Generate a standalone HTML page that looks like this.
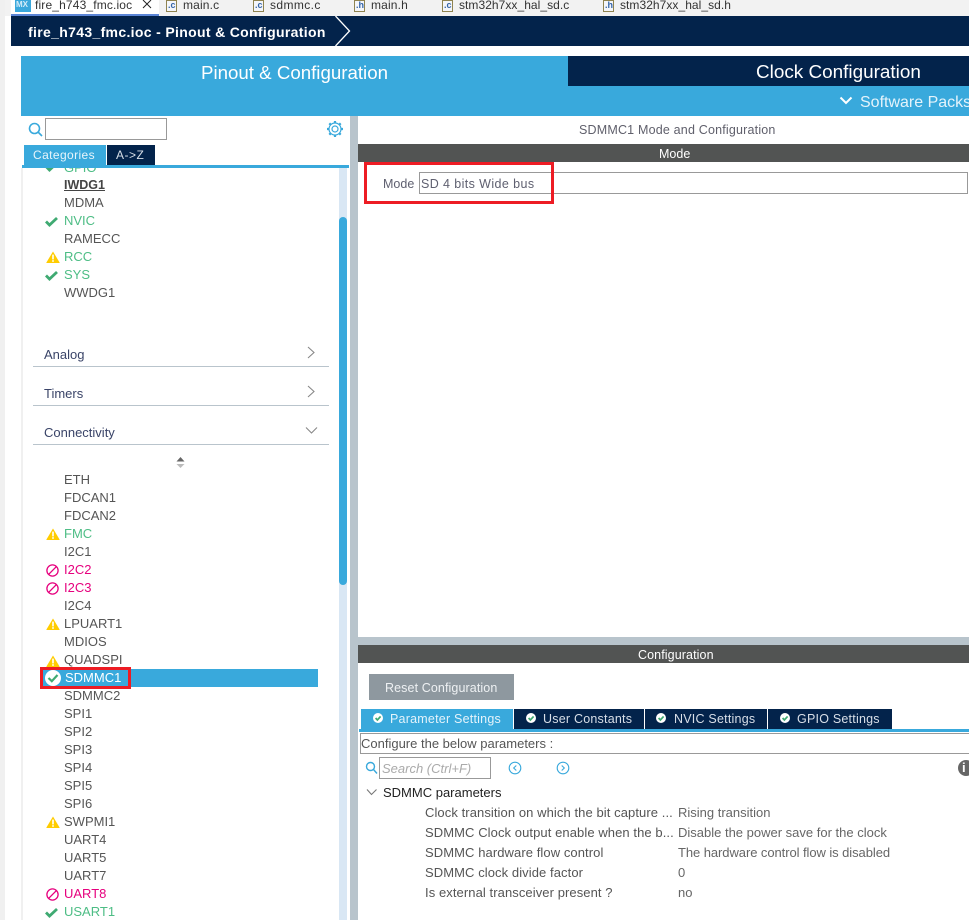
<!DOCTYPE html>
<html><head><meta charset="utf-8">
<style>
html,body{margin:0;padding:0;background:#fff}
#p{position:relative;width:969px;height:920px;overflow:hidden;background:#fff;font-family:"Liberation Sans",sans-serif;font-size:12px;color:#4c4c4c}
#p div,#p span.t,#p svg{position:absolute}
.t{position:absolute;white-space:nowrap;line-height:16px}
.l{left:64px;font-size:13px;color:#555}
.g{color:#4dbd85}.m{color:#e6007e}
.tab{color:#333;font-size:12px;top:-3px;letter-spacing:.15px}
.sec{left:44px;font-size:13px;color:#3a4468}
.ln{left:33px;width:296px;height:1px;background:#b9c4cc}
.ph{color:#555;font-size:13px;letter-spacing:.08px}
.v{color:#666;font-size:13px;letter-spacing:0}
.wt{color:#fff}
.st{font-size:12.5px;letter-spacing:.22px}
</style></head><body><div id="p">
<svg width="0" height="0" style="position:absolute"><defs>
<g id="chk"><path d="M1 5.5 L4.5 9 L12 2" fill="none" stroke="#3faa72" stroke-width="2.8"/></g>
<g id="warn"><path d="M7 .5 L13.6 11.5 Q14 12 13 12 L1 12 Q0 12 .4 11.5 Z" fill="#ffcc00"/><rect x="6.2" y="3.6" width="1.6" height="4.8" fill="#fff"/><rect x="6.2" y="9.2" width="1.6" height="1.6" fill="#fff"/></g>
<g id="no"><circle cx="6.5" cy="6.5" r="5.6" fill="none" stroke="#e6007e" stroke-width="1.3"/><path d="M2.6 10.4 L10.4 2.6" stroke="#e6007e" stroke-width="1.3"/></g>
<g id="cc"><circle cx="5" cy="5" r="5" fill="#fff"/><path d="M2.6 5 L4.4 7 L7.6 3.4" fill="none" stroke="#3faa72" stroke-width="1.7"/></g>
</defs></svg>

<div style="left:0;top:0;width:969px;height:16px;background:#f2f2f2"></div>
<div style="left:0;top:0;width:5px;height:920px;background:#f0f0f0"></div>
<div style="left:5px;top:16px;width:6px;height:904px;background:#fff"></div>
<div style="left:11px;top:0;width:148px;height:16px;background:#fff"></div>
<div style="left:11px;top:14px;width:148px;height:2px;background:#5b85d6"></div>
<div style="left:15px;top:0;width:16px;height:12px;background:#3aa8dc"></div>
<span class="t" style="left:16px;top:-3px;font-size:8px;font-weight:bold;color:#d5ecf8">MX</span>
<span class="t tab" style="left:35px">fire_h743_fmc.ioc</span>
<svg style="left:142px;top:0" width="11" height="10"><path d="M1 0 L9 8 M9 0 L1 8" stroke="#222" stroke-width="1"/></svg>
<div style="left:166px;top:0;width:9px;height:10px;border:1px solid #8f8350;background:#f4f6fa"></div><span class="t" style="left:168px;top:-3px;font-size:9px;font-weight:bold;color:#3565a8">.c</span>
<span class="t tab" style="left:183px">main.c</span>
<div style="left:253px;top:0;width:9px;height:10px;border:1px solid #8f8350;background:#f4f6fa"></div><span class="t" style="left:255px;top:-3px;font-size:9px;font-weight:bold;color:#3565a8">.c</span>
<span class="t tab" style="left:270px;letter-spacing:.4px">sdmmc.c</span>
<div style="left:354px;top:0;width:9px;height:10px;border:1px solid #8f8350;background:#f4f6fa"></div><span class="t" style="left:356px;top:-3px;font-size:9px;font-weight:bold;color:#3565a8">.h</span>
<span class="t tab" style="left:371px">main.h</span>
<div style="left:442px;top:0;width:9px;height:10px;border:1px solid #8f8350;background:#f4f6fa"></div><span class="t" style="left:444px;top:-3px;font-size:9px;font-weight:bold;color:#3565a8">.c</span>
<span class="t tab" style="left:459px;letter-spacing:.05px">stm32h7xx_hal_sd.c</span>
<div style="left:603px;top:0;width:9px;height:10px;border:1px solid #8f8350;background:#f4f6fa"></div><span class="t" style="left:605px;top:-3px;font-size:9px;font-weight:bold;color:#3565a8">.h</span>
<span class="t tab" style="left:620px;letter-spacing:.05px">stm32h7xx_hal_sd.h</span>

<div style="left:11px;top:16px;width:958px;height:30px;background:#03234b"></div>
<span class="t" style="left:28px;top:24px;font-size:14px;font-weight:bold;color:#fff;letter-spacing:.33px">fire_h743_fmc.ioc - Pinout &amp; Configuration</span>
<svg style="left:333px;top:16px" width="20" height="30"><path d="M2.5 0 L16.5 15 L2.5 30" fill="none" stroke="#fff" stroke-width="1.3"/></svg>

<div style="left:21px;top:56px;width:948px;height:60px;background:#39a9dc"></div>
<div style="left:568px;top:56px;width:401px;height:30px;background:#03234b"></div>
<span class="t" style="left:201px;top:63px;font-size:18.7px;line-height:20px;color:#fff">Pinout &amp; Configuration</span>
<span class="t" style="left:756px;top:63px;font-size:18.9px;line-height:20px;color:#fff">Clock Configuration</span>
<svg style="left:839px;top:96px" width="15" height="10"><path d="M1.5 1.5 L7 7 L12.5 1.5" fill="none" stroke="#fff" stroke-width="2"/></svg>
<span class="t" style="left:860px;top:93px;font-size:16px;line-height:20px;color:#e4f3fb">Software Packs</span>

<svg style="left:28px;top:122px" width="16" height="15"><circle cx="6.5" cy="6.5" r="5" fill="none" stroke="#39a9dc" stroke-width="1.6"/><path d="M10 10 L14 14" stroke="#39a9dc" stroke-width="1.6"/></svg>
<div style="left:45px;top:118px;width:120px;height:20px;border:1px solid #999;background:#fff"></div>
<svg style="left:326px;top:120px" width="18" height="18" viewBox="0 0 18 18"><circle cx="9" cy="9" r="3" fill="none" stroke="#39a9dc" stroke-width="1.2"/><circle cx="9" cy="9" r="6" fill="none" stroke="#39a9dc" stroke-width="1.2"/><path d="M9 1V3M9 15V17M1 9H3M15 9H17M3.3 3.3L4.8 4.8M13.2 13.2L14.7 14.7M14.7 3.3L13.2 4.8M4.8 13.2L3.3 14.7" stroke="#39a9dc" stroke-width="2.2"/></svg>
<div style="left:24px;top:145px;width:82px;height:20px;background:#39a9dc"></div>
<span class="t" style="left:33px;top:147px;font-size:12px;color:#e8f5fb;letter-spacing:.4px">Categories</span>
<div style="left:107px;top:145px;width:48px;height:20px;background:#03234b"></div>
<span class="t" style="left:116px;top:147px;font-size:12px;color:#d8dfe8;letter-spacing:.5px">A-&gt;Z</span>
<div style="left:22px;top:165px;width:327px;height:3px;background:#39a9dc"></div>
<div style="left:21px;top:168px;width:2px;height:752px;background:#f0f0f0"></div>

<div style="left:339px;top:168px;width:8px;height:752px;background:#d9e7f4"></div>
<div style="left:339px;top:217px;width:8px;height:368px;background:#39a9dc;border-radius:4px"></div>
<div style="left:350px;top:116px;width:8px;height:804px;background:#b8c4cc"></div>

<div style="left:23px;top:168px;width:316px;height:8px;overflow:hidden">
<span class="t g" style="left:41px;top:-8px;font-size:13px">GPIO</span>
<svg style="left:22px;top:-7px" width="14" height="12"><use href="#chk"/></svg></div>
<span class="t l" style="top:177px;font-weight:bold;text-decoration:underline;color:#444;font-size:12.5px">IWDG1</span>
<span class="t l" style="top:195px">MDMA</span>
<span class="t l g" style="top:213px;color:#4dbd85">NVIC</span>
<span class="t l" style="top:231px">RAMECC</span>
<span class="t l g" style="top:249px;color:#4dbd85">RCC</span>
<span class="t l g" style="top:267px;color:#4dbd85">SYS</span>
<span class="t l" style="top:285px">WWDG1</span>
<svg style="left:45px;top:216px" width="14" height="12"><use href="#chk"/></svg>
<svg style="left:46px;top:251px" width="14" height="13"><use href="#warn"/></svg>
<svg style="left:45px;top:270px" width="14" height="12"><use href="#chk"/></svg>

<span class="t sec" style="top:347px">Analog</span><div class="ln" style="top:366px"></div>
<span class="t sec" style="top:386px">Timers</span><div class="ln" style="top:405px"></div>
<span class="t sec" style="top:425px">Connectivity</span><div class="ln" style="top:444px"></div>
<svg style="left:306px;top:346px" width="10" height="13"><path d="M2 1 L8 6.5 L2 12" fill="none" stroke="#888" stroke-width="1.1"/></svg>
<svg style="left:306px;top:385px" width="10" height="13"><path d="M2 1 L8 6.5 L2 12" fill="none" stroke="#888" stroke-width="1.1"/></svg>
<svg style="left:305px;top:426px" width="13" height="9"><path d="M1 1.5 L6.5 7 L12 1.5" fill="none" stroke="#888" stroke-width="1.1"/></svg>
<svg style="left:176px;top:457px" width="9" height="12"><path d="M4.5 0 L8.5 4.5 H.5 Z" fill="#666"/><path d="M.5 7 H8.5 L4.5 11 Z" fill="#bbb"/></svg>

<span class="t l" style="top:472px">ETH</span>
<span class="t l" style="top:490px">FDCAN1</span>
<span class="t l" style="top:508px">FDCAN2</span>
<span class="t l g" style="top:526px;color:#4dbd85">FMC</span>
<span class="t l" style="top:544px">I2C1</span>
<span class="t l m" style="top:562px;color:#e6007e">I2C2</span>
<span class="t l m" style="top:580px;color:#e6007e">I2C3</span>
<span class="t l" style="top:598px">I2C4</span>
<span class="t l" style="top:616px">LPUART1</span>
<span class="t l" style="top:634px">MDIOS</span>
<span class="t l" style="top:652px">QUADSPI</span>
<div style="left:43px;top:669px;width:275px;height:18px;background:#39a9dc"></div>
<span class="t l" style="top:670px;left:65px;color:#fff">SDMMC1</span>
<span class="t l" style="top:688px">SDMMC2</span>
<span class="t l" style="top:706px">SPI1</span>
<span class="t l" style="top:724px">SPI2</span>
<span class="t l" style="top:742px">SPI3</span>
<span class="t l" style="top:760px">SPI4</span>
<span class="t l" style="top:778px">SPI5</span>
<span class="t l" style="top:796px">SPI6</span>
<span class="t l" style="top:814px">SWPMI1</span>
<span class="t l" style="top:832px">UART4</span>
<span class="t l" style="top:850px">UART5</span>
<span class="t l" style="top:868px">UART7</span>
<span class="t l m" style="top:886px;color:#e6007e">UART8</span>
<span class="t l g" style="top:904px;color:#4dbd85">USART1</span>
<svg style="left:46px;top:528px" width="14" height="13"><use href="#warn"/></svg>
<svg style="left:46px;top:564px" width="13" height="13"><use href="#no"/></svg>
<svg style="left:46px;top:582px" width="13" height="13"><use href="#no"/></svg>
<svg style="left:46px;top:618px" width="14" height="13"><use href="#warn"/></svg>
<svg style="left:46px;top:655px" width="14" height="13"><use href="#warn"/></svg>
<svg style="left:45px;top:670px" width="16" height="16" viewBox="0 0 16 16"><circle cx="8" cy="8" r="8" fill="#fff"/><path d="M3.5 8 L6.8 11.2 L12.5 5" fill="none" stroke="#3faa72" stroke-width="2.2"/></svg>
<div style="left:40px;top:667px;width:85px;height:16px;border:3px solid #ed1c24"></div>
<svg style="left:46px;top:816px" width="14" height="13"><use href="#warn"/></svg>
<svg style="left:46px;top:888px" width="13" height="13"><use href="#no"/></svg>
<svg style="left:45px;top:907px" width="14" height="12"><use href="#chk"/></svg>

<span class="t" style="left:579px;top:122px;font-size:12.5px;color:#5f5f6b;letter-spacing:.19px">SDMMC1 Mode and Configuration</span>
<div style="left:358px;top:144px;width:611px;height:18px;background:#525453"></div>
<span class="t wt" style="left:659px;top:146px;font-size:12.5px">Mode</span>
<span class="t" style="left:383px;top:176px;font-size:12.5px;color:#5f6070">Mode</span>
<div style="left:419px;top:172px;width:547px;height:20px;border:1px solid #999"></div>
<span class="t" style="left:421px;top:176px;font-size:12.5px;color:#5f6070;letter-spacing:.4px">SD 4 bits Wide bus</span>
<div style="left:364px;top:162px;width:184px;height:36px;border:3px solid #ed1c24"></div>

<div style="left:358px;top:637px;width:611px;height:8px;background:#b8c4cc"></div>
<div style="left:358px;top:645px;width:611px;height:18px;background:#525453"></div>
<span class="t wt" style="left:638px;top:647px;font-size:12.5px;letter-spacing:.1px">Configuration</span>
<div style="left:369px;top:674px;width:145px;height:26px;background:#8e989f"></div>
<span class="t" style="left:385px;top:680px;font-size:12.5px;color:#eef1f3;letter-spacing:.1px">Reset Configuration</span>

<div style="left:361px;top:709px;width:152px;height:20px;background:#39a9dc"></div>
<div style="left:514px;top:709px;width:130px;height:20px;background:#03234b"></div>
<div style="left:645px;top:709px;width:122px;height:20px;background:#03234b"></div>
<div style="left:768px;top:709px;width:124px;height:20px;background:#03234b"></div>
<div style="left:359px;top:729px;width:610px;height:3px;background:#39a9dc"></div>
<svg style="left:373px;top:713px" width="10" height="10"><use href="#cc"/></svg>
<svg style="left:526px;top:713px" width="10" height="10"><use href="#cc"/></svg>
<svg style="left:656px;top:713px" width="10" height="10"><use href="#cc"/></svg>
<svg style="left:780px;top:713px" width="10" height="10"><use href="#cc"/></svg>
<span class="t st" style="left:390px;top:711px;color:#e4f3fb">Parameter Settings</span>
<span class="t st" style="left:543px;top:711px;color:#d8dfe8">User Constants</span>
<span class="t st" style="left:674px;top:711px;color:#d8dfe8">NVIC Settings</span>
<span class="t st" style="left:797px;top:711px;color:#d8dfe8">GPIO Settings</span>

<div style="left:360px;top:733px;width:609px;height:19px;border:1px solid #999;border-right:0"></div>
<span class="t" style="left:361px;top:736px;font-size:13px;color:#555">Configure the below parameters :</span>
<svg style="left:365px;top:761px" width="13" height="14"><circle cx="5.5" cy="5.5" r="4" fill="none" stroke="#39a9dc" stroke-width="1.4"/><path d="M8.5 8.5 L12 12.5" stroke="#39a9dc" stroke-width="1.4"/></svg>
<div style="left:379px;top:757px;width:110px;height:20px;border:1px solid #999"></div>
<span class="t" style="left:382px;top:761px;font-size:13px;font-style:italic;color:#aaa">Search (Ctrl+F)</span>
<svg style="left:508px;top:761px" width="14" height="14"><circle cx="7" cy="7" r="5.8" fill="none" stroke="#39a9dc" stroke-width="1.1"/><path d="M8.3 4.5 L5.7 7 L8.3 9.5" fill="none" stroke="#39a9dc" stroke-width="1.1"/></svg>
<svg style="left:556px;top:761px" width="14" height="14"><circle cx="7" cy="7" r="5.8" fill="none" stroke="#39a9dc" stroke-width="1.1"/><path d="M5.7 4.5 L8.3 7 L5.7 9.5" fill="none" stroke="#39a9dc" stroke-width="1.1"/></svg>
<div style="left:958px;top:760px;width:16px;height:16px;border-radius:50%;background:#666"></div>
<span class="t" style="left:962px;top:760px;font-size:13px;font-weight:bold;color:#fff">i</span>
<svg style="left:366px;top:788px" width="12" height="9"><path d="M1 1.5 L5.5 6.5 L10.5 1.5" fill="none" stroke="#777" stroke-width="1.1"/></svg>
<span class="t" style="left:383px;top:785px;font-size:13px;color:#222">SDMMC parameters</span>
<span class="t ph" style="left:425px;top:805px">Clock transition on which the bit capture ...</span>
<span class="t ph" style="left:425px;top:825px">SDMMC Clock output enable when the b...</span>
<span class="t ph" style="left:425px;top:845px">SDMMC hardware flow control</span>
<span class="t ph" style="left:425px;top:865px">SDMMC clock divide factor</span>
<span class="t ph" style="left:425px;top:885px">Is external transceiver present ?</span>
<span class="t v" style="left:678px;top:805px">Rising transition</span>
<span class="t v" style="left:678px;top:825px">Disable the power save for the clock</span>
<span class="t v" style="left:678px;top:845px;letter-spacing:-.07px">The hardware control flow is disabled</span>
<span class="t v" style="left:678px;top:865px">0</span>
<span class="t v" style="left:678px;top:885px">no</span>
</div></body></html>
